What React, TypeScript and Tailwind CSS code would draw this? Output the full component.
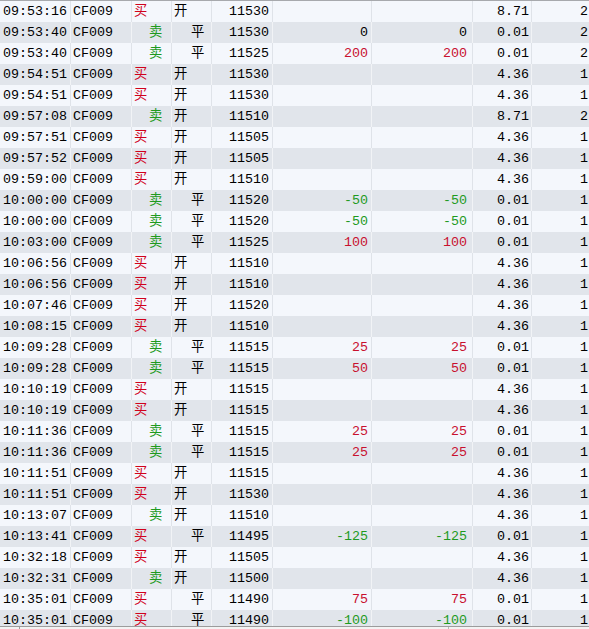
import React from 'react'

type Row = [string, 'b' | 's', 'o' | 'c', string, string, string, string, string]

// time, 买/卖, 开/平, price, pnl, pnl2, fee, qty
const rows: Row[] = [
  ['09:53:16', 'b', 'o', '11530', '', '', '8.71', '2'],
  ['09:53:40', 's', 'c', '11530', '0', '0', '0.01', '2'],
  ['09:53:40', 's', 'c', '11525', '200', '200', '0.01', '2'],
  ['09:54:51', 'b', 'o', '11530', '', '', '4.36', '1'],
  ['09:54:51', 'b', 'o', '11530', '', '', '4.36', '1'],
  ['09:57:08', 's', 'o', '11510', '', '', '8.71', '2'],
  ['09:57:51', 'b', 'o', '11505', '', '', '4.36', '1'],
  ['09:57:52', 'b', 'o', '11505', '', '', '4.36', '1'],
  ['09:59:00', 'b', 'o', '11510', '', '', '4.36', '1'],
  ['10:00:00', 's', 'c', '11520', '-50', '-50', '0.01', '1'],
  ['10:00:00', 's', 'c', '11520', '-50', '-50', '0.01', '1'],
  ['10:03:00', 's', 'c', '11525', '100', '100', '0.01', '1'],
  ['10:06:56', 'b', 'o', '11510', '', '', '4.36', '1'],
  ['10:06:56', 'b', 'o', '11510', '', '', '4.36', '1'],
  ['10:07:46', 'b', 'o', '11520', '', '', '4.36', '1'],
  ['10:08:15', 'b', 'o', '11510', '', '', '4.36', '1'],
  ['10:09:28', 's', 'c', '11515', '25', '25', '0.01', '1'],
  ['10:09:28', 's', 'c', '11515', '50', '50', '0.01', '1'],
  ['10:10:19', 'b', 'o', '11515', '', '', '4.36', '1'],
  ['10:10:19', 'b', 'o', '11515', '', '', '4.36', '1'],
  ['10:11:36', 's', 'c', '11515', '25', '25', '0.01', '1'],
  ['10:11:36', 's', 'c', '11515', '25', '25', '0.01', '1'],
  ['10:11:51', 'b', 'o', '11515', '', '', '4.36', '1'],
  ['10:11:51', 'b', 'o', '11530', '', '', '4.36', '1'],
  ['10:13:07', 's', 'o', '11510', '', '', '4.36', '1'],
  ['10:13:41', 'b', 'c', '11495', '-125', '-125', '0.01', '1'],
  ['10:32:18', 'b', 'o', '11505', '', '', '4.36', '1'],
  ['10:32:31', 's', 'o', '11500', '', '', '4.36', '1'],
  ['10:35:01', 'b', 'c', '11490', '75', '75', '0.01', '1'],
  ['10:35:01', 'b', 'c', '11490', '-100', '-100', '0.01', '1'],
]

const pnlColor = (v: string) =>
  v.startsWith('-') ? 'text-[#1e9a1e]' : v === '0' ? 'text-black' : 'text-[#c8102e]'

const App = () => {
  return (
    <div
      className="flex h-[629px] w-[589px] flex-col overflow-hidden border-t border-[#a7a9ad] bg-white text-[13.33px] text-black"
      style={{ fontFamily: '"Liberation Mono", "Noto Sans CJK SC", monospace' }}
    >
      <div className="h-[625px] overflow-hidden">
        {rows.map((r, i) => {
          const odd = i % 2 === 1
          const line = odd ? 'border-[#f1f3f6]' : 'border-[#dfe3e9]'
          const cell = `flex h-full shrink-0 items-center border-r ${line}`
          return (
            <div
              key={i}
              className={`flex h-[21px] whitespace-nowrap ${odd ? 'bg-[#e1e5eb]' : 'bg-[#f4f7fc]'}`}
            >
              <div className={`${cell} w-[71px] pl-[3px]`}>{r[0]}</div>
              <div className={`${cell} w-[61px] pl-[2px]`}>CF009</div>
              {/* 买卖 */}
              <div className={`${cell} w-[40px] ${r[1] === 'b' ? 'pl-[2px] text-[#d0021b]' : 'pl-[17px] text-[#1e9a1e]'}`}>
                {r[1] === 'b' ? '买' : '卖'}
              </div>
              {/* 开平 */}
              <div className={`${cell} w-[40px] ${r[2] === 'o' ? 'pl-[2px]' : 'pl-[19px]'}`}>
                {r[2] === 'o' ? '开' : '平'}
              </div>
              <div className={`${cell} w-[61px] justify-end pr-[3px]`}>{r[3]}</div>
              <div className={`${cell} w-[99px] justify-end pr-[3px] ${pnlColor(r[4])}`}>{r[4]}</div>
              <div className={`${cell} w-[101px] justify-end pr-[5px] ${pnlColor(r[5])}`}>{r[5]}</div>
              <div className={`${cell} w-[59px] justify-end pr-[2px]`}>{r[6]}</div>
              <div className="flex h-full shrink-0 items-center pl-[48px]">{r[7]}</div>
            </div>
          )
        })}
      </div>
      {/* 横向滚动条 */}
      <div className="flex flex-1 border-t border-[#9c9c9c] bg-[#f3f3f3]">
        <div className="w-[20px] border-r border-[#9c9c9c]" />
        <div className="w-[429px] border-r border-[#b8b8b8]" />
        <div className="flex-1" />
      </div>
    </div>
  )
}

export default App
